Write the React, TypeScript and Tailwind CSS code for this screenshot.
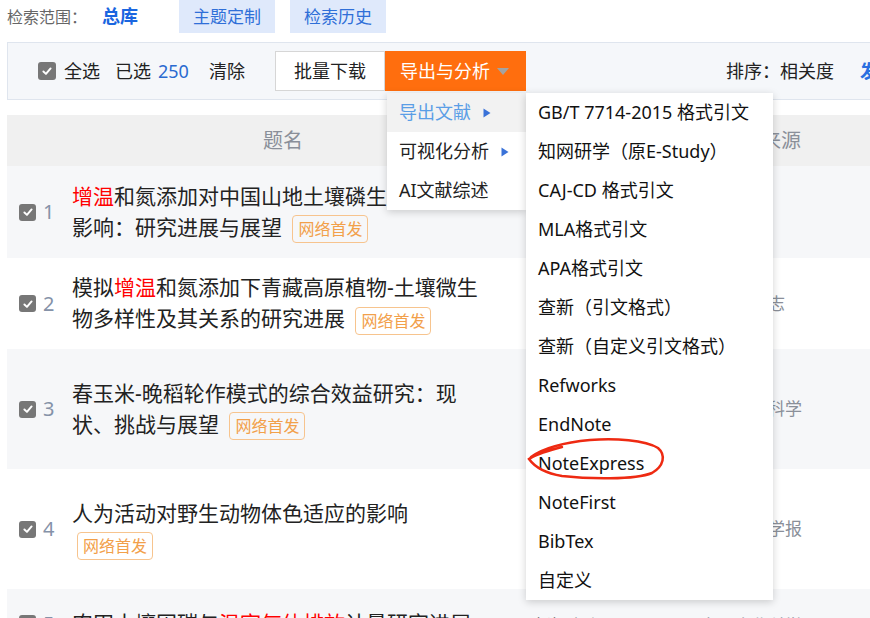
import React from 'react';

const FONT = 'font-["Noto_Sans","Noto_Sans_CJK_SC",sans-serif]';

// 勾选框
const CheckBox = ({ size = 17 }: { size?: number }) => (
  <span
    className="inline-flex shrink-0 items-center justify-center rounded-[3px] bg-[#777777]"
    style={{ width: size, height: size }}
  >
    <svg viewBox="0 0 16 16" className="h-[12px] w-[12px]">
      <path d="M3.2 8.6 L6.6 11.8 L12.8 4.6" stroke="white" strokeWidth="2.6" fill="none" strokeLinecap="round" strokeLinejoin="round" />
    </svg>
  </span>
);

const Tag = () => (
  <>
    {' '}
    <span className="ml-[5px] inline-block h-[28px] rounded-[4px] border border-[#f7c48e] px-[5px] align-middle text-[16px] leading-[26px] text-[#f2a04a]">
      网络首发
    </span>
  </>
);

type Part = [string, boolean];

interface Row {
  n: number;
  h: string;
  bg: string;
  parts: Part[];
  author: string;
  source: string;
}

const rows: Row[] = [
  {
    n: 1,
    h: 'h-[92px]',
    bg: 'bg-[#f6f7f9]',
    parts: [['增温', true], ['和氮添加对中国山地土壤磷生物有效性的影响：研究进展与展望', false]],
    author: '张丽; 王磊',
    source: '生态学报',
  },
  {
    n: 2,
    h: 'h-[91px]',
    bg: 'bg-white',
    parts: [['模拟', false], ['增温', true], ['和氮添加下青藏高原植物-土壤微生物多样性及其关系的研究进展', false]],
    author: '李娜; 陈伟',
    source: '生态学杂志',
  },
  {
    n: 3,
    h: 'h-[120px]',
    bg: 'bg-[#f6f7f9]',
    parts: [['春玉米-晚稻轮作模式的综合效益研究：现状、挑战与展望', false]],
    author: '刘洋; 黄强',
    source: '中国农业科学',
  },
  {
    n: 4,
    h: 'h-[120px]',
    bg: 'bg-white',
    parts: [['人为活动对野生动物体色适应的影响', false]],
    author: '周杰; 吴敏',
    source: '应用生态学报',
  },
];

const level1 = ['导出文献', '可视化分析', 'AI文献综述'];
const level2 = [
  'GB/T 7714-2015 格式引文',
  '知网研学（原E-Study）',
  'CAJ-CD 格式引文',
  'MLA格式引文',
  'APA格式引文',
  '查新（引文格式）',
  '查新（自定义引文格式）',
  'Refworks',
  'EndNote',
  'NoteExpress',
  'NoteFirst',
  'BibTex',
  '自定义',
];

const Caret = () => (
  <svg viewBox="0 0 8 10" className="ml-[12px] h-[10px] w-[8px]">
    <path d="M0.5 0.5 L7.5 5 L0.5 9.5 Z" fill="#3a72d8" />
  </svg>
);

export default function App() {
  return (
    <div className={`relative h-[618px] w-[870px] overflow-hidden bg-white text-[#222] ${FONT}`}>
      {/* 检索范围 */}
      <div className="flex h-[33px] items-center pl-[7px]">
        <span className="text-[16px] text-[#666]">检索范围：</span>
        <span className="ml-[15px] text-[18px] font-bold text-[#1a66e0]">总库</span>
        <span className="ml-[41px] flex h-[33px] w-[96px] items-center justify-center bg-[#dfe9fb] text-[17px] text-[#2f6fd8]">
          主题定制
        </span>
        <span className="ml-[15px] flex h-[33px] w-[96px] items-center justify-center bg-[#dfe9fb] text-[17px] text-[#2f6fd8]">
          检索历史
        </span>
      </div>

      {/* 工具栏 */}
      <div className="ml-[7px] mt-[9px] flex h-[58px] w-[940px] items-center whitespace-nowrap border border-[#dfe5ee] bg-[#f5f7fa] pl-[30px] text-[18px] [&>*]:shrink-0">
        <CheckBox size={18} />
        <span className="ml-[8px]">全选</span>
        <span className="ml-[15px]">已选</span>
        <span className="ml-[7px] text-[#2a6ad0]">250</span>
        <span className="ml-[20px]">清除</span>
        <span className="ml-[30px] flex h-[40px] w-[110px] items-center justify-center border border-[#d6d6d6] bg-white">
          批量下载
        </span>
        <span className="flex h-[40px] w-[141px] items-center bg-[#ff6e0e] pl-[15px] text-white">
          导出与分析
          <svg viewBox="0 0 12 7" className="ml-[7px] h-[7px] w-[12px]">
            <path d="M0 0 L12 0 L6 7 Z" fill="#a3a3a3" />
          </svg>
        </span>
        <span className="ml-[200px]">排序：相关度</span>
        <span className="ml-[26px] font-bold text-[#2a6fe0]">发表时间</span>
      </div>

      {/* 表头 */}
      <div className="ml-[7px] mt-[15px] flex h-[51px] items-center bg-[#f0f0f0] text-[20px] text-[#8a8f99]">
        <span className="ml-[256px]">题名</span>
        <span className="ml-[458px]">来源</span>
      </div>

      {/* 列表 */}
      {rows.map((r) => (
        <div key={r.n} className={`ml-[7px] flex items-center ${r.h} ${r.bg}`}>
          <div className="flex w-[65px] items-center pl-[12px]">
            <CheckBox />
            <span className="ml-[7px] text-[20px] text-[#8592a8]">{r.n}</span>
          </div>
          <div className="w-[422px] text-[21px] leading-[31px]">
            {r.parts.map(([t, hl], i) => (
              <span key={i} className={hl ? 'text-[#ff0000]' : ''}>
                {t}
              </span>
            ))}
            <Tag />
          </div>
          <div className="ml-[33px] w-[173px] text-[17px] text-[#555]">{r.author}</div>
          <div className="text-[17px] text-[#8a8f99]">{r.source}</div>
        </div>
      ))}
      <div className="ml-[7px] flex h-[92px] items-start bg-[#f6f7f9] pt-[19px]">
        <div className="flex w-[65px] items-center pl-[12px] pt-[7px]">
          <CheckBox />
          <span className="ml-[7px] text-[20px] leading-[17px] text-[#8592a8]">5</span>
        </div>
        <div className="w-[422px] text-[21px] leading-[31px]">
          农田土壤固碳与<span className="text-[#ff0000]">温室气体排放</span>计量研究进展
        </div>
        <div className="ml-[33px] w-[173px] pt-[5px] text-[17px] text-[#555]">孙建刚; 程明</div>
        <div className="pt-[5px] text-[17px] text-[#8a8f99]">中国农业科学</div>
      </div>

      {/* 下拉菜单 */}
      <div className="absolute left-[387px] top-[93px] w-[139px] bg-white text-[18px] shadow-[0_2px_8px_rgba(0,0,0,0.18)]">
        {level1.map((t, i) => (
          <div
            key={t}
            className={`flex h-[39px] items-center pl-[12px] ${i === 0 ? 'bg-[#f2f2f2] text-[#5b9ee6]' : 'text-[#222]'}`}
          >
            {t}
            {i < 2 && <Caret />}
          </div>
        ))}
      </div>
      <div className="absolute left-[526px] top-[93px] w-[247px] bg-white text-[18px] shadow-[0_2px_8px_rgba(0,0,0,0.18)]">
        {level2.map((t) => (
          <div key={t} className="flex h-[39px] items-center whitespace-nowrap pl-[12px] text-[#111]">
            {t}
          </div>
        ))}
      </div>

      {/* 手绘红圈 */}
      <svg className="pointer-events-none absolute left-0 top-0 h-[618px] w-[870px]" viewBox="0 0 870 618">
        <path
          d="M531 457 C545 447 568 442 590 440 C615 438 645 440 658 448 C666 455 664 466 652 473 C635 480 588 479 562 476 C544 473 534 466 529 459 C536 454 548 451 562 447"
          stroke="#ee2a12"
          strokeWidth="2.5"
          fill="none"
          strokeLinecap="round"
        />
      </svg>
    </div>
  );
}
